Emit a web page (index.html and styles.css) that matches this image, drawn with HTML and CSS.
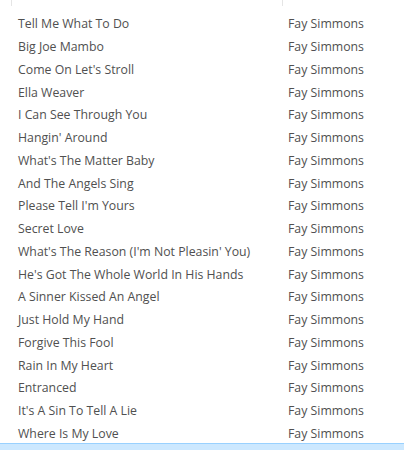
FILE: index.html
```html
<!DOCTYPE html>
<html>
<head>
<meta charset="utf-8">
<link rel="stylesheet" href="styles.css">
</head>
<body>
<div class="list">
  <div class="header">
    <div class="hcol hcol-title"></div>
    <div class="hcol hcol-artist"></div>
  </div>
  <div class="rows">
    <div class="row"><span class="title">Tell Me What To Do</span><span class="artist">Fay Simmons</span></div>
    <div class="row"><span class="title">Big Joe Mambo</span><span class="artist">Fay Simmons</span></div>
    <div class="row"><span class="title">Come On Let's Stroll</span><span class="artist">Fay Simmons</span></div>
    <div class="row"><span class="title">Ella Weaver</span><span class="artist">Fay Simmons</span></div>
    <div class="row"><span class="title">I Can See Through You</span><span class="artist">Fay Simmons</span></div>
    <div class="row"><span class="title">Hangin' Around</span><span class="artist">Fay Simmons</span></div>
    <div class="row"><span class="title">What's The Matter Baby</span><span class="artist">Fay Simmons</span></div>
    <div class="row"><span class="title">And The Angels Sing</span><span class="artist">Fay Simmons</span></div>
    <div class="row"><span class="title">Please Tell I'm Yours</span><span class="artist">Fay Simmons</span></div>
    <div class="row"><span class="title">Secret Love</span><span class="artist">Fay Simmons</span></div>
    <div class="row"><span class="title">What's The Reason (I'm Not Pleasin' You)</span><span class="artist">Fay Simmons</span></div>
    <div class="row"><span class="title">He's Got The Whole World In His Hands</span><span class="artist">Fay Simmons</span></div>
    <div class="row"><span class="title">A Sinner Kissed An Angel</span><span class="artist">Fay Simmons</span></div>
    <div class="row"><span class="title">Just Hold My Hand</span><span class="artist">Fay Simmons</span></div>
    <div class="row"><span class="title">Forgive This Fool</span><span class="artist">Fay Simmons</span></div>
    <div class="row"><span class="title">Rain In My Heart</span><span class="artist">Fay Simmons</span></div>
    <div class="row"><span class="title">Entranced</span><span class="artist">Fay Simmons</span></div>
    <div class="row"><span class="title">It's A Sin To Tell A Lie</span><span class="artist">Fay Simmons</span></div>
    <div class="row"><span class="title">Where Is My Love</span><span class="artist">Fay Simmons</span></div>
    <div class="row row-selected"></div>
  </div>
</div>
</body>
</html>
```

FILE: styles.css
```css
html, body {
  margin: 0;
  padding: 0;
  background: #ffffff;
  overflow: hidden;
}
body {
  font-family: "Open Sans", "Noto Sans", sans-serif;
  font-size: 12.3px;
  color: #505050;
}
.list {
  width: 404px;
  height: 450px;
  overflow: hidden;
}
.header {
  display: flex;
  height: 6px;
}
.hcol {
  height: 6px;
}
.hcol-title {
  width: 282px;
  margin-left: 11px;
  border-left: 1px solid #e5e5e5;
}
.hcol-artist {
  border-left: 1px solid #e5e5e5;
  margin-left: -12px;
}
.rows {
  padding-top: 6.6px;
}
.row {
  display: flex;
  height: 22.75px;
  align-items: center;
  white-space: nowrap;
}
.title {
  width: 270px;
  padding-left: 18px;
  overflow: hidden;
}
.artist {
  padding-left: 0;
}
.row-selected {
  margin-top: -2px;
  background: #cce8ff;
  border-top: 1px solid #99d1ff;
  box-sizing: border-box;
}
```
